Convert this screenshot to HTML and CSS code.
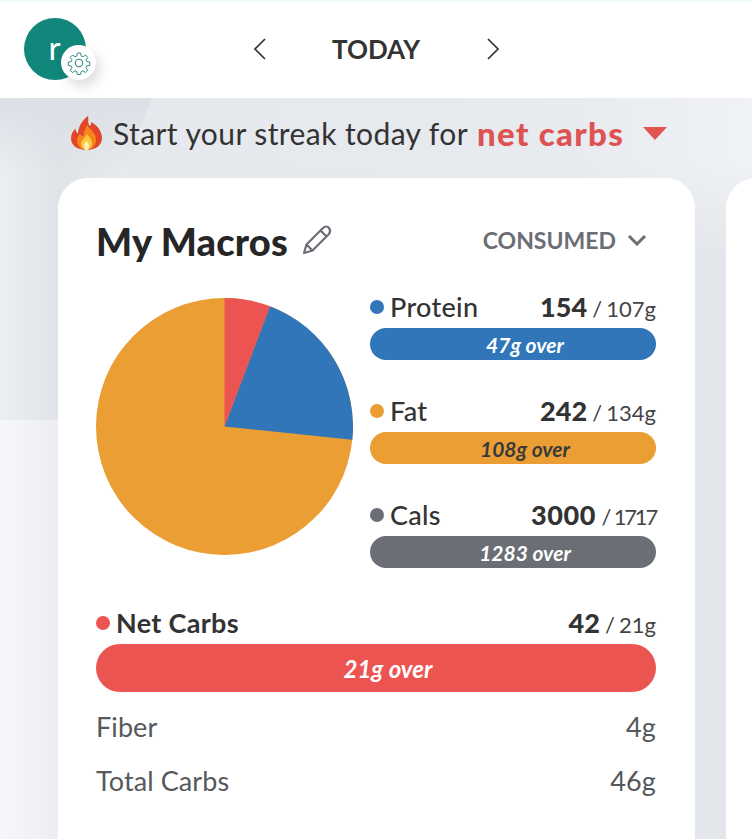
FILE: index.html
```html
<!DOCTYPE html>
<html lang="en">
<head>
<meta charset="utf-8">
<title>My Macros</title>
<link rel="stylesheet" href="styles.css">
</head>
<body>
<div class="app">
  <div class="bg-band"></div>
  <div class="bg-left"></div>
  <div class="bg-lower"></div>
  <header class="topbar">
    <div class="avatar">
      <span class="avatar-letter">r</span>
      <span class="gear">
        <svg viewBox="0 0 24 24" width="26" height="26" fill="none" stroke="#2a8a7c" stroke-width="1" stroke-linejoin="round">
          <circle cx="12" cy="12" r="3.4"/>
          <path d="M10.300 1.800h3.400l.5 3 1.900.8 2.500-1.800 2.400 2.400-1.800 2.500.8 1.900 3 .5v3.400l-3 .5-.8 1.900 1.800 2.500-2.400 2.400-2.500-1.800-1.900.8-.5 3h-3.400l-.5-3-1.900-.8-2.500 1.800-2.400-2.400 1.800-2.500-.8-1.900-3-.5v-3.400l3-.5.8-1.900-1.800-2.500 2.400-2.400 2.500 1.800 1.900-.8z" transform="translate(1.200 1.200) scale(.9)"/>
        </svg>
      </span>
    </div>
    <nav class="daynav">
      <svg class="nav-arrow" viewBox="0 0 14 24" width="14" height="24" fill="none" stroke="#333" stroke-width="1.700"><path d="M12 2 2 12l10 10"/></svg>
      <span class="day">TODAY</span>
      <svg class="nav-arrow" viewBox="0 0 14 24" width="14" height="24" fill="none" stroke="#333" stroke-width="1.700"><path d="m2 2 10 10L2 22"/></svg>
    </nav>
  </header>

  <div class="streak">
    <svg class="flame" viewBox="0 0 33 34" width="33" height="34">
      <path fill="#e2452a" d="M18 0c1 5-1 7 2 10 1-1 1.500-2.500 1-4 6 3 11 9 11 16 0 7-6 12-15.500 12S1 29 1 22.500c0-4.500 2-7.500 4.500-10 0 2.500 1 4 2.500 5 .5-7 4-13 10-17.500z"/>
      <path fill="#f5861f" d="M17.500 9c1 4 8.500 7 8.500 14.500 0 6-4 10.500-9.500 10.500S7 29.500 7 24.500c0-3 1.500-5 3-7 1 2 2 2.500 3.500 2.500 0-4 1.500-7.500 4-11z"/>
      <path fill="#fdc93c" d="M17 18c2 3 5 5.500 5 9.500 0 3.500-2.500 6.500-5.500 6.500S11 31 11 27.500c0-3.500 4.500-5.500 6-9.500z"/>
      <path fill="#fff2c2" d="M16.500 25c1.200 1.500 2.500 2.700 2.500 5 0 2.300-1.200 4-2.500 4S14 32.300 14 30c0-2.300 1.300-3.500 2.500-5z"/>
    </svg>
    <span class="streak-text">Start your streak today for</span>
    <span class="streak-macro">net carbs</span>
    <span class="caret"></span>
  </div>

  <div class="cards">
    <section class="card">
      <div class="card-head">
        <div class="title-wrap">
          <h1 class="title">My Macros</h1>
          <svg class="pencil" viewBox="0 0 32 32" width="32" height="32" fill="none" stroke="#6b6e75" stroke-width="2.200" stroke-linejoin="round">
            <path d="M2 30l2.500-8.500L21 5c2-2 4.500-2 6 0s1.500 4 0 6L10.500 27.500z"/>
            <path d="M18.500 7.500l6 6M4.500 21.500l6 6"/>
          </svg>
        </div>
        <div class="mode">
          <span>CONSUMED</span>
          <svg viewBox="0 0 20 12" width="20" height="12" fill="none" stroke="#6b6e75" stroke-width="3"><path d="M2 2l8 8 8-8"/></svg>
        </div>
      </div>

      <div class="chart-row">
        <svg class="pie" viewBox="0 0 258 258" width="257" height="257">
          <circle cx="129" cy="129" r="129" fill="#ea9e33"/>
          <path d="M129 129 257.300 142.400A129 129 0 0 0 174.600 8.300Z" fill="#3176b9"/>
          <path d="M129 129 174.600 8.300A129 129 0 0 0 129 0Z" fill="#ec5451"/>
        </svg>
        <div class="macros">
          <div class="macro">
            <div class="macro-head">
              <span class="dot dot-blue"></span><span class="macro-name">Protein</span>
              <span class="macro-val"><b>154</b> / 107g</span>
            </div>
            <div class="bar bar-blue">47g over</div>
          </div>
          <div class="macro">
            <div class="macro-head">
              <span class="dot dot-orange"></span><span class="macro-name">Fat</span>
              <span class="macro-val"><b>242</b> / 134g</span>
            </div>
            <div class="bar bar-orange">108g over</div>
          </div>
          <div class="macro">
            <div class="macro-head">
              <span class="dot dot-gray"></span><span class="macro-name">Cals</span>
              <span class="macro-val macro-val-tight"><b>3000</b> / 1717</span>
            </div>
            <div class="bar bar-gray">1283 over</div>
          </div>
        </div>
      </div>

      <div class="carbs">
        <div class="macro-head">
          <span class="dot dot-red"></span><span class="macro-name carbs-name">Net Carbs</span>
          <span class="macro-val"><b>42</b> / 21g</span>
        </div>
        <div class="bar bar-red">21g over</div>
      </div>
      <div class="row"><span>Fiber</span><span>4g</span></div>
      <div class="row"><span>Total Carbs</span><span>46g</span></div>
    </section>
    <section class="card card-next"></section>
  </div>
</div>
</body>
</html>
```
FILE: styles.css
```css
* { box-sizing: border-box; }
html, body { margin: 0; height: 100%; }
body { font-family: "Lato", "Liberation Sans", sans-serif; color: #333; overflow: hidden; }
.app {
  position: relative;
  width: 752px;
  height: 839px;
  overflow: hidden;
  background: #e3e6ea;
  border-top: 2px solid #effafc;
}
.bg-band {
  position: absolute;
  left: 0;
  right: 0;
  top: 96px;
  height: 160px;
  background:
    linear-gradient(180deg, rgba(227,230,234,0) 40%, #e3e6ea 100%),
    linear-gradient(90deg, #e5e8ed 0, #e7eaef 75%, #f0f2f5 100%);
}
.bg-left {
  position: absolute;
  left: 0;
  top: 96px;
  width: 152px;
  height: 322px;
  background:
    linear-gradient(180deg, #dce0e6 0, rgba(220,224,230,0) 75px),
    linear-gradient(90deg, #ebeef2 0, #e0e3e8 58px, #e9ecf0 152px);
  clip-path: polygon(0 0, 100% 0, 92% 10%, 84% 26%, 84% 100%, 0 100%);
}
.bg-lower {
  position: absolute;
  left: 0;
  top: 418px;
  bottom: 0;
  width: 58px;
  background: linear-gradient(90deg, #f5f7fa, #eceef2);
}
.topbar {
  position: relative;
  display: flex;
  align-items: center;
  justify-content: center;
  height: 96px;
  background: #fff;
}
.avatar {
  position: absolute;
  left: 24px;
  top: 16px;
  width: 62px;
  height: 62px;
  border-radius: 50%;
  background: #10877a;
  color: #fff;
  display: flex;
  align-items: center;
  justify-content: center;
}
.avatar-letter { font-size: 33px; line-height: 36px; margin-top: -5px; margin-right: 1px; }
.gear {
  position: absolute;
  left: 37px;
  top: 27px;
  width: 35px;
  height: 35px;
  border-radius: 50%;
  background: #fff;
  box-shadow: 4px 6px 12px rgba(0,0,0,.14);
  display: flex;
  align-items: center;
  justify-content: center;
}
.daynav {
  display: flex;
  align-items: center;
  gap: 65px;
  margin-top: -2px;
}
.day { font-size: 26px; font-weight: 700; color: #333; width: 89px; text-align: center; }
.streak {
  position: relative;
  display: flex;
  align-items: center;
  height: 80px;
  padding: 0 0 10px 70px;
  font-size: 30px;
}
.flame { margin-right: 10px; flex: none; }
.streak-text { color: #333; letter-spacing: .42px; }
.streak-macro { margin-left: 9px; font-size: 33px; font-weight: 900; color: #de5351; letter-spacing: 1.300px; }
.caret {
  margin-left: 19px;
  width: 0;
  height: 0;
  border-left: 12.500px solid transparent;
  border-right: 12.500px solid transparent;
  border-top: 13px solid #e25351;
}
.cards {
  position: relative;
  display: flex;
  gap: 31px;
  padding-left: 58px;
}
.card {
  flex: none;
  width: 637px;
  height: 700px;
  background: #fff;
  border-radius: 30px;
  padding: 38px 39px 0 38px;
}
.card-head { display: flex; align-items: center; justify-content: space-between; height: 50px; padding-right: 9px; }
.title-wrap { display: flex; align-items: center; gap: 14px; }
.title { margin: 0; font-size: 38px; font-weight: 900; color: #262626; line-height: 50px; letter-spacing: .2px; }
.pencil { margin-top: -4px; }
.mode { display: flex; align-items: center; gap: 11px; color: #6b6e75; font-size: 23px; font-weight: 700; margin-top: -3px; }
.chart-row { display: flex; gap: 17px; margin-top: 32px; }
.pie { flex: none; }
.macros { flex: 1; display: flex; flex-direction: column; gap: 36px; margin-top: -6px; }
.macro-head { display: flex; align-items: center; height: 36px; padding-bottom: 8px; font-size: 27px; color: #333; }
.macro-name { font-weight: 500; margin-left: 6px; flex: 1; letter-spacing: .3px; }
.macro-val { font-size: 22px; color: #444; word-spacing: -1.500px; }
.macro-val b { font-size: 27px; color: #333; font-weight: 900; margin-right: 1px; }
.macro-val-tight { letter-spacing: -2.200px; word-spacing: 1px; }
.macro-val-tight b { letter-spacing: .6px; }
.dot { width: 14px; height: 14px; border-radius: 50%; flex: none; margin-top: 2px; }
.dot-blue { background: #3176b9; }
.dot-orange { background: #ea9e33; }
.dot-gray { background: #6b6e75; }
.dot-red { background: #ec5451; }
.bar {
  height: 32px;
  border-radius: 16px;
  display: flex;
  align-items: center;
  justify-content: center;
  padding-left: 24px;
  font-size: 21px;
  font-weight: 700;
  font-style: italic;
  color: #fff;
}
.bar-blue { background: #3176b9; }
.bar-orange { background: #ea9e33; color: #3a3a3a; }
.bar-gray { background: #6b6e75; }
.carbs { margin-top: 40px; }
.carbs-name { font-weight: 700; }
.bar-red { height: 48px; border-radius: 24px; background: #ec5451; font-size: 24px; }
.row { display: flex; justify-content: space-between; align-items: center; height: 54px; font-size: 27px; color: #55585c; letter-spacing: .1px; }
.carbs + .row { margin-top: 7px; }
.card-next { width: 200px; }
```
